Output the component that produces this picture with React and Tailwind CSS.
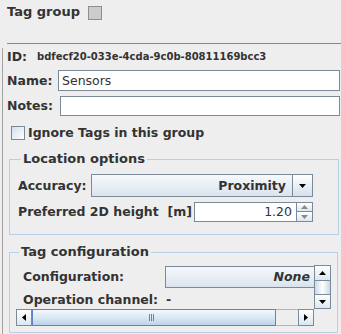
import React from "react";

const ArrowUp = ({ color = "#000" }) => (
  <svg width="7" height="4" viewBox="0 0 7 4">
    <polygon points="0,4 7,4 3.5,0" fill={color} />
  </svg>
);

const ArrowDown = ({ color = "#000" }) => (
  <svg width="7" height="4" viewBox="0 0 7 4">
    <polygon points="0,0 7,0 3.5,4" fill={color} />
  </svg>
);

const ArrowLeft = () => (
  <svg width="4" height="7" viewBox="0 0 4 7">
    <polygon points="4,0 4,7 0,3.5" fill="#000" />
  </svg>
);

const ArrowRight = () => (
  <svg width="4" height="7" viewBox="0 0 4 7">
    <polygon points="0,0 0,7 4,3.5" fill="#000" />
  </svg>
);

const ScrollButton = ({ children, className = "" }) => (
  <div
    className={
      "flex items-center justify-center border border-[#7a8a99] bg-gradient-to-b from-white to-[#dce6f0] " +
      className
    }
  >
    {children}
  </div>
);

const App = () => {
  return (
    <div className="w-[341px] h-[334px] overflow-hidden bg-[#eeeeee] text-[#333333] font-['DejaVu_Sans',sans-serif] font-bold text-[12.5px] leading-[16px]">
      {/* Header */}
      <div className="h-[43px] flex items-start pl-[7px] pt-[4px]">
        <span className="text-[13px]">Tag group</span>
        <span className="ml-[8px] mt-[2px] w-[14px] h-[14px] border border-[#8e8e8e] bg-[#cccccc]" />
      </div>
      <div className="ml-[7px] h-px bg-[#7288b6]" />

      {/* Body */}
      <div className="ml-[2px] border-l border-[#a3a3a3] h-[290px]">
        {/* ID */}
        <div className="mt-[4px] h-[18px] flex items-center pl-[4px]">
          <span className="w-[30px]">ID:</span>
          <span className="text-[10px]">bdfecf20-033e-4cda-9c0b-80811169bcc3</span>
        </div>

        {/* Name */}
        <div className="mt-[4px] flex items-center pl-[4px] pr-[1px]">
          <span className="w-[51px]">Name:</span>
          <div className="flex-1 h-[21px] border border-[#7a8a99] bg-white flex items-center px-[3px] font-normal text-[12.5px] text-[#333333]">
            Sensors
          </div>
        </div>

        {/* Notes */}
        <div className="mt-[5px] flex items-center pl-[4px] pr-[1px]">
          <span className="w-[53px]">Notes:</span>
          <div className="flex-1 h-[20px] border border-[#7a8a99] bg-white" />
        </div>

        {/* Ignore tags */}
        <div className="mt-[8px] h-[18px] flex items-center pl-[8px]">
          <span className="w-[14px] h-[14px] border border-[#7a8a99] bg-gradient-to-br from-[#d3e0ee] to-white" />
          <span className="ml-[3px]">Ignore Tags in this group</span>
        </div>

        {/* Location options */}
        <fieldset className="mt-[9px] ml-[6px] w-[330px] border border-[#b8cfe5] pl-[8px] pt-[7px] pb-[12px]">
          <legend className="ml-[3px] px-[2px] leading-[16px] text-[13px]">Location options</legend>
          <div className="flex items-center">
            <span className="w-[73px]">Accuracy:</span>
            <div className="flex h-[23px] w-[222px] border border-[#7a8a99]">
              <div className="flex-1 flex items-center justify-end pr-[6px] bg-gradient-to-b from-[#f6f9fc] to-[#dae3ed]">
                Proximity
              </div>
              <div className="w-[20px] border-l border-[#7a8a99] flex items-center justify-center bg-gradient-to-b from-white to-[#d5e1ec]">
                <ArrowDown />
              </div>
            </div>
          </div>
          <div className="mt-[5px] flex items-center">
            <span className="w-[176px] whitespace-pre">Preferred 2D height  [m]</span>
            <div className="flex h-[20px] w-[119px]">
              <div className="flex-1 border border-[#7a8a99] bg-white flex items-center justify-end pr-[4px] font-normal">
                1.20
              </div>
              <div className="w-[16px] flex flex-col">
                <ScrollButton className="h-[10px] border-l-0">
                  <ArrowUp color="#8a8a8a" />
                </ScrollButton>
                <ScrollButton className="h-[10px] border-l-0 border-t-0">
                  <ArrowDown color="#8a8a8a" />
                </ScrollButton>
              </div>
            </div>
          </div>
        </fieldset>

        {/* Tag configuration */}
        <fieldset className="mt-[9px] ml-[6px] w-[329px] border border-[#b8cfe5] pl-[6px] pt-[5px] pb-[6px]">
          <legend className="ml-[3px] px-[2px] leading-[16px] text-[13px]">Tag configuration</legend>
          <div className="grid grid-cols-[298px_17px] grid-rows-[44px_17px]">
            {/* Viewport */}
            <div className="overflow-hidden">
              <div className="w-[340px] pl-[7px] pt-[1px]">
                <div className="flex items-center">
                  <span className="w-[142px]">Configuration:</span>
                  <div className="w-[170px] h-[22px] border border-[#7a8a99] bg-gradient-to-b from-[#f6f9fc] to-[#dae3ed] flex items-center justify-end pr-[24px] italic">
                    None
                  </div>
                </div>
                <div className="mt-[4px] flex items-center">
                  <span className="w-[143px]">Operation channel:</span>
                  <span>-</span>
                </div>
              </div>
            </div>

            {/* Vertical scrollbar */}
            <div className="flex flex-col">
              <ScrollButton className="h-[16px]">
                <ArrowUp />
              </ScrollButton>
              <div className="flex-1 border-x border-[#7a8a99] bg-gradient-to-r from-[#c8daee] via-white to-[#c8daee]" />
              <ScrollButton className="h-[15px]">
                <ArrowDown />
              </ScrollButton>
            </div>

            {/* Horizontal scrollbar */}
            <div className="flex">
              <ScrollButton className="w-[16px]">
                <ArrowLeft />
              </ScrollButton>
              <div className="w-[244px] border border-[#6382bf] bg-gradient-to-b from-[#f2f7fc] via-[#dbe8f5] to-[#bcd2ea] flex items-center justify-center">
                <div className="flex gap-[1px] h-[7px] ml-[-5px]">
                  <span className="w-px bg-[#6382bf]" />
                  <span className="w-px bg-[#6382bf]" />
                  <span className="w-px bg-[#6382bf]" />
                </div>
              </div>
              <div className="flex-1 border-y border-[#a8b8c8] bg-[#eeeeee]" />
              <ScrollButton className="w-[16px]">
                <ArrowRight />
              </ScrollButton>
            </div>
            <div />
          </div>
        </fieldset>
      </div>
    </div>
  );
};

export default App;
